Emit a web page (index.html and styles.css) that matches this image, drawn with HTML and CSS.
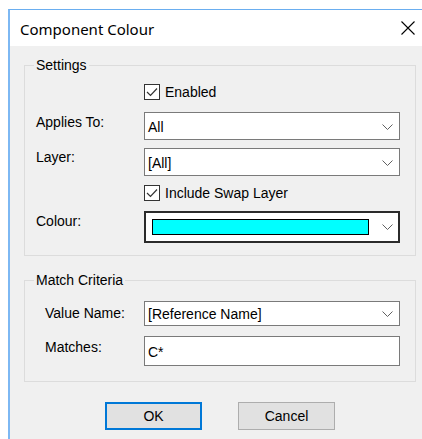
FILE: index.html
```html
<!DOCTYPE html>
<html>
<head>
<meta charset="utf-8">
<title>Component Colour</title>
<link rel="stylesheet" href="styles.css">
</head>
<body>
<div class="window">
  <div class="titlebar">
    <span class="title">Component Colour</span>
    <svg class="close" width="14" height="14" viewBox="0 0 14 14">
      <path d="M0.5 0.5 L13.5 13.5 M13.5 0.5 L0.5 13.5" stroke="#000" stroke-width="1.1" fill="none"/>
    </svg>
  </div>
  <div class="client">
    <fieldset class="group settings">
      <legend>Settings</legend>
      <div class="row r-enabled">
        <span class="lbl"></span>
        <label class="check">
          <span class="box"><svg width="14" height="14" viewBox="0 0 14 14"><path d="M2 7 L5.5 10.5 L12 3.5" stroke="#333" stroke-width="1.2" fill="none"/></svg></span>
          Enabled
        </label>
      </div>
      <div class="row r-applies">
        <span class="lbl">Applies To:</span>
        <div class="combo"><span class="val">All</span><svg class="chev" width="11" height="6" viewBox="0 0 11 6"><path d="M0.5 0.5 L5.5 5.5 L10.5 0.5" stroke="#606060" stroke-width="1" fill="none"/></svg></div>
      </div>
      <div class="row r-layer">
        <span class="lbl">Layer:</span>
        <div class="combo"><span class="val">[All]</span><svg class="chev" width="11" height="6" viewBox="0 0 11 6"><path d="M0.5 0.5 L5.5 5.5 L10.5 0.5" stroke="#606060" stroke-width="1" fill="none"/></svg></div>
      </div>
      <div class="row r-swap">
        <span class="lbl"></span>
        <label class="check">
          <span class="box"><svg width="14" height="14" viewBox="0 0 14 14"><path d="M2 7 L5.5 10.5 L12 3.5" stroke="#333" stroke-width="1.2" fill="none"/></svg></span>
          Include Swap Layer
        </label>
      </div>
      <div class="row r-colour">
        <span class="lbl">Colour:</span>
        <div class="combo colour"><span class="swatch"></span><svg class="chev" width="11" height="6" viewBox="0 0 11 6"><path d="M0.5 0.5 L5.5 5.5 L10.5 0.5" stroke="#606060" stroke-width="1" fill="none"/></svg></div>
      </div>
    </fieldset>

    <fieldset class="group match">
      <legend>Match Criteria</legend>
      <div class="row r-value">
        <span class="lbl">Value Name:</span>
        <div class="combo"><span class="val">[Reference Name]</span><svg class="chev" width="11" height="6" viewBox="0 0 11 6"><path d="M0.5 0.5 L5.5 5.5 L10.5 0.5" stroke="#606060" stroke-width="1" fill="none"/></svg></div>
      </div>
      <div class="row r-matches">
        <span class="lbl">Matches:</span>
        <div class="textbox"><span class="val">C*</span></div>
      </div>
    </fieldset>

    <div class="buttons">
      <button class="btn default">OK</button>
      <button class="btn">Cancel</button>
    </div>
  </div>
</div>
</body>
</html>
```

FILE: styles.css
```css
html, body {
  margin: 0;
  padding: 0;
  background: #fff;
  overflow: hidden;
}

body {
  width: 422px;
  height: 439px;
  font-family: "Liberation Sans", Arial, sans-serif;
  font-size: 14px;
  color: #000;
}

.window {
  margin: 9px 0 0 8px;
  border-top: 1px solid #6aaef0;
  border-left: 2px solid #7db8f3;
  height: 430px;
  box-sizing: border-box;
  display: flex;
  flex-direction: column;
}

.titlebar {
  height: 36px;
  flex: none;
  background: #fff;
  display: flex;
  align-items: center;
  padding: 0 7px 0 10px;
}

.title {
  font-family: "Noto Sans", sans-serif;
  font-size: 15px;
  margin-top: 1px;
}

.close {
  margin-left: auto;
  display: block;
}

.client {
  background: #f0f0f0;
  flex: 1;
  padding: 11px 0 0 14px;
}

.group {
  width: 392px;
  box-sizing: border-box;
  margin: 0;
  padding: 0 0 12px 0;
  border: 1px solid #dcdcdc;
  min-inline-size: auto;
  display: flex;
  flex-direction: column;
}

.group legend {
  margin-left: 9px;
  padding: 0 2px;
  line-height: 16px;
  font-size: 14px;
}

.row {
  display: grid;
  grid-template-columns: 119px 256px;
  align-items: start;
}

.lbl {
  padding-left: 11px;
  line-height: 16px;
}

.match .lbl {
  padding-left: 20px;
}

.check {
  display: flex;
  align-items: center;
  gap: 5px;
  height: 17px;
}

.box {
  width: 16px;
  height: 16px;
  box-sizing: border-box;
  border: 1px solid #333;
  background: #fff;
  display: flex;
  align-items: center;
  justify-content: center;
}

.box svg {
  display: block;
}

.combo, .textbox {
  box-sizing: border-box;
  height: 28px;
  background: #fff;
  border: 1px solid #7a7a7a;
  display: flex;
  align-items: center;
  padding: 1px 6px 0 3px;
}

.combo .chev {
  margin-left: auto;
  display: block;
}

.r-enabled { margin-top: 10px; }
.r-applies { margin-top: 12px; }
.r-applies .lbl { padding-top: 2px; }
.r-layer { margin-top: 8px; }
.r-layer .lbl { padding-top: 1px; }
.r-swap { margin-top: 8px; }
.r-colour { margin-top: 10px; }
.r-colour .lbl { padding-top: 2px; }

.combo.colour {
  height: 32px;
  border: 2px solid #2b2b2b;
  padding: 0 5px 0 6px;
}

.swatch {
  width: 217px;
  height: 16px;
  box-sizing: border-box;
  border: 1px solid #000;
  background: #00ffff;
}

.match {
  margin-top: 16px;
  padding-bottom: 15px;
}

.r-value { margin-top: 13px; }
.r-value .combo { height: 25px; }
.r-value .lbl { padding-top: 4px; }
.r-matches { margin-top: 10px; }
.r-matches .textbox { height: 30px; }
.r-matches .lbl { padding-top: 3px; }

.buttons {
  width: 392px;
  display: flex;
  justify-content: center;
  gap: 36px;
  margin-top: 20px;
}

.btn {
  width: 97px;
  height: 28px;
  box-sizing: border-box;
  background: #e1e1e1;
  border: 1px solid #adadad;
  font-family: "Liberation Sans", Arial, sans-serif;
  font-size: 14px;
  color: #000;
  padding: 0;
}

.btn.default {
  border: 2px solid #0078d7;
}
```
